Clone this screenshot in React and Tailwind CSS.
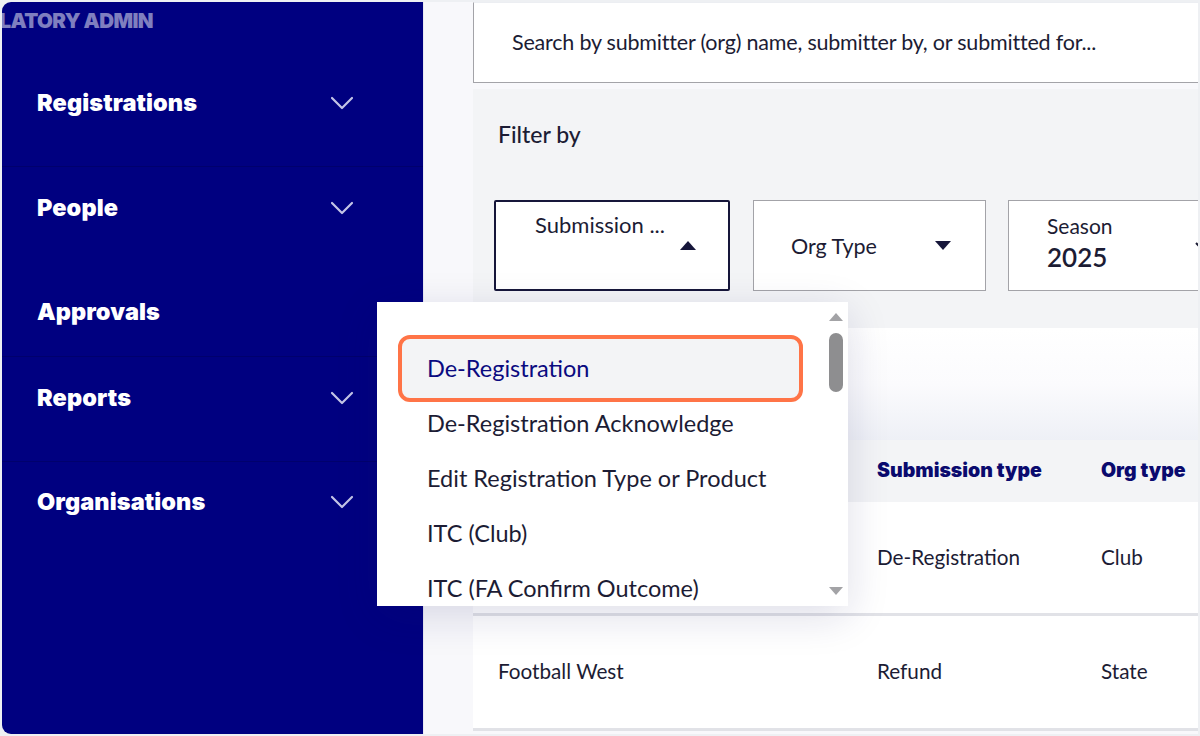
import React from "react";

const Chevron = () => (
  <svg width="24" height="14" viewBox="0 0 24 14" fill="none">
    <polyline points="2,2 12,12 22,2" stroke="#c3c4e6" strokeWidth="2.2" strokeLinecap="round" strokeLinejoin="round" />
  </svg>
);

const TriUp = ({ color = "#16163a", w = 16, h = 9 }) => (
  <svg width={w} height={h} viewBox="0 0 16 9">
    <polygon points="8,0 16,9 0,9" fill={color} />
  </svg>
);
const TriDown = ({ color = "#16163a", w = 16, h = 9 }) => (
  <svg width={w} height={h} viewBox="0 0 16 9">
    <polygon points="0,0 16,0 8,9" fill={color} />
  </svg>
);

const heavy = { fontFamily: "Inter, 'Noto Sans', sans-serif" };

function NavRow({ label, chevron = true, className = "" }) {
  return (
    <div className={`flex items-center justify-between h-[26px] pl-[35px] pr-[69px] ${className}`}>
      <span className="text-white font-black text-[23.5px] tracking-[0.1px] leading-none" style={heavy}>
        {label}
      </span>
      {chevron && <Chevron />}
    </div>
  );
}

export default function App() {
  return (
    <div
      className="relative w-[1200px] h-[736px] bg-[#eef0f3] p-[2px] overflow-hidden"
      style={{ fontFamily: "Lato, 'Liberation Sans', sans-serif" }}
    >
      <div className="flex h-full rounded-l-[9px] overflow-hidden">
        {/* Sidebar */}
        <aside className="w-[421px] h-full bg-[#000080] overflow-hidden flex flex-col shrink-0">
          <div className="h-[165px] border-b border-[#00006c]">
            <div className="mt-[6px] h-[26px] w-[151px] flex justify-end items-center whitespace-nowrap">
              <span className="text-[20.5px] font-black text-white/50 tracking-[-0.6px] leading-none" style={heavy}>
                REGULATORY ADMIN
              </span>
            </div>
            <NavRow label="Registrations" className="mt-[56px]" />
          </div>
          <div className="h-[190px] border-b border-[#00006c] pt-[28px]">
            <NavRow label="People" />
            <NavRow label="Approvals" chevron={false} className="mt-[78px]" />
          </div>
          <div className="h-[105px] border-b border-[#00006c] pt-[28px]">
            <NavRow label="Reports" />
          </div>
          <div className="pt-[27px]">
            <NavRow label="Organisations" />
          </div>
        </aside>

        {/* Main */}
        <main className="flex-1 h-full bg-[#f8f8fb] border-l border-[#e9eaf2] pl-[49px] flex flex-col">
          {/* Search */}
          <div className="h-[81px] bg-white border-l border-b border-[#a3a3a8] border-t border-t-[#eceef2] border-r border-r-[#e4e6ea] rounded-tr-[10px] flex items-center pl-[38px]">
            <span className="text-[21.5px] text-[#1c1c34] tracking-[-0.2px] whitespace-nowrap">
              Search by submitter (org) name, submitter by, or submitted for...
            </span>
          </div>

          {/* Filter panel */}
          <div className="mt-[6px] h-[239px] bg-[#f3f4f6] pl-[21px] overflow-hidden">
            <div className="h-[111px] pt-[31px] pl-[4px]">
              <span className="text-[23px] text-[#1c1c34] leading-[28px] font-medium">Filter by</span>
            </div>
            <div className="flex gap-[23px] whitespace-nowrap">
              <div className="w-[236px] h-[91px] shrink-0 bg-white border-2 border-[#16163a] rounded-[2px] pt-[10px] pl-[39px] pr-[32px] flex flex-col">
                <span className="text-[22px] leading-[26px] text-[#1c1c34]">Submission ...</span>
                <div className="flex justify-end mt-[3px]">
                  <TriUp />
                </div>
              </div>
              <div className="w-[233px] h-[91px] shrink-0 bg-white border border-[#a3a3a8] flex items-center justify-between pl-[37px] pr-[34px]">
                <span className="text-[21.5px] leading-[26px] text-[#1c1c34]">Org Type</span>
                <TriDown />
              </div>
              <div className="w-[233px] h-[91px] shrink-0 bg-white border border-[#a3a3a8] flex items-start pt-[12px] pl-[38px] -ml-[1px]">
                <div className="w-[147px] flex flex-col">
                  <span className="text-[21px] leading-[26px] text-[#1c1c34]">Season</span>
                  <span className="text-[26px] leading-[30px] font-semibold text-[#1c1c34] mt-[3px]">2025</span>
                </div>
                <svg className="self-center -mt-[12px]" width="14" height="9" viewBox="0 0 14 9" fill="none">
                  <polyline points="2,2 7,7 12,2" stroke="#1c1c34" strokeWidth="2" />
                </svg>
              </div>
            </div>
          </div>

          {/* Blank area */}
          <div className="h-[112px] bg-gradient-to-b from-white via-[#fbfbfd] to-[#eef0f6]" />

          {/* Table header */}
          <div
            className="h-[62px] bg-[#f3f4f6] grid grid-cols-[404px_224px_1fr] items-center text-[#0a0a6e] font-black text-[19.5px] tracking-[0px] whitespace-nowrap"
            style={heavy}
          >
            <span className="pl-[25px]">Submitted by (org)</span>
            <span>Submission type</span>
            <span>Org type</span>
          </div>

          {/* Rows */}
          <div className="h-[114px] shrink-0 bg-white grid grid-cols-[404px_224px_1fr] items-center text-[20.7px] text-[#1c1c34] border-b-[3px] border-[#e1e2e7]">
            <span className="pl-[25px]">Football Queensland</span>
            <span>De-Registration</span>
            <span>Club</span>
          </div>
          <div className="h-[115px] shrink-0 bg-white grid grid-cols-[404px_224px_1fr] items-center text-[20.7px] text-[#1c1c34] border-b-[3px] border-[#e1e2e7]">
            <span className="pl-[25px]">Football West</span>
            <span>Refund</span>
            <span>State</span>
          </div>
        </main>
      </div>

      {/* Dropdown menu overlay */}
      <div className="absolute left-[377px] top-[302px] w-[471px] h-[304px] bg-white shadow-[0_10px_40px_rgba(20,20,90,0.14)] flex">
        <div className="flex-1 pt-[39px] pl-[21px] pr-[21px]">
          <div className="relative h-[55px] flex items-center pl-[29px]">
            <span className="absolute left-0 right-0 -top-[6px] -bottom-[6px] bg-[#f3f4f6] border-[4px] border-[#ff7447] rounded-[12px]" />
            <span className="relative text-[23.5px] text-[#0a0a80]">De-Registration</span>
          </div>
          {["De-Registration Acknowledge", "Edit Registration Type or Product", "ITC (Club)", "ITC (FA Confirm Outcome)"].map((t) => (
            <div key={t} className="h-[55px] flex items-center pl-[29px] text-[23.5px] text-[#1c1c34] whitespace-nowrap">
              {t}
            </div>
          ))}
        </div>
        <div className="w-[24px] flex flex-col items-center pt-[11px] pb-[11px]">
          <TriUp color="#a3a3a6" w={14} h={8} />
          <div className="mt-[12px] w-[14px] h-[59px] rounded-full bg-[#8e8e90]" />
          <div className="flex-1" />
          <TriDown color="#a3a3a6" w={14} h={8} />
        </div>
      </div>
    </div>
  );
}
